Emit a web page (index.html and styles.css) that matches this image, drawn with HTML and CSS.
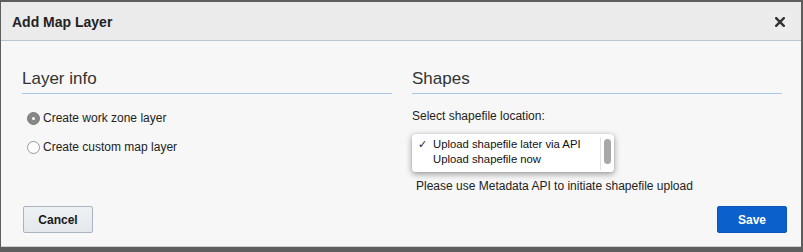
FILE: index.html
```html
<!DOCTYPE html>
<html>
<head>
<meta charset="utf-8">
<link rel="stylesheet" href="styles.css">
</head>
<body>
<div class="dialog">
  <div class="dlg-header">
    <span class="dlg-title">Add Map Layer</span>
    <span class="dlg-close">
      <svg width="10" height="10" viewBox="0 0 10 10"><path d="M1.2 1.2 L8.8 8.8 M8.8 1.2 L1.2 8.8" stroke="#333" stroke-width="2.4" stroke-linecap="square"/></svg>
    </span>
  </div>
  <div class="dlg-body">
    <div class="cols">
      <div class="col">
        <div class="col-head">Layer info</div>
        <div class="radios">
          <div class="radio-row"><span class="radio checked"></span><span class="radio-label">Create work zone layer</span></div>
          <div class="radio-row"><span class="radio"></span><span class="radio-label">Create custom map layer</span></div>
        </div>
      </div>
      <div class="col">
        <div class="col-head">Shapes</div>
        <div class="field-label">Select shapefile location:</div>
        <div class="listbox">
          <div class="options">
            <div class="option"><span class="check">✓</span>Upload shapefile later via API</div>
            <div class="option"><span class="check"></span>Upload shapefile now</div>
          </div>
          <div class="scroll"><span class="thumb"></span></div>
        </div>
        <div class="note">Please use Metadata API to initiate shapefile upload</div>
      </div>
    </div>
    <div class="dlg-footer">
      <button class="btn btn-cancel">Cancel</button>
      <button class="btn btn-save">Save</button>
    </div>
  </div>
</div>
</body>
</html>
```
FILE: styles.css
```css
html, body {
  margin: 0;
  padding: 0;
}
body {
  background: #5e5e5e;
  width: 803px;
  height: 252px;
  overflow: hidden;
  font-family: "Liberation Sans", Arial, sans-serif;
  color: #222;
}
.dialog {
  margin: 2px 0 0 1px;
  width: 800px;
  background: #f7f7f7;
  border-bottom: 1px solid #d0d0d0;
}
.dlg-header {
  box-sizing: border-box;
  height: 39px;
  padding: 2px 11px 0 11px;
  background: #ebebeb;
  border-bottom: 1px solid #b9c5d2;
  display: flex;
  align-items: center;
  justify-content: space-between;
}
.dlg-title {
  font-size: 14px;
  font-weight: bold;
  color: #222;
}
.dlg-close {
  width: 20px;
  height: 20px;
  display: flex;
  align-items: center;
  justify-content: center;
  background: #ececec;
}
.dlg-body {
  padding: 28px 14px 13px 21px;
}
.cols {
  display: grid;
  grid-template-columns: 370px 370px;
  column-gap: 20px;
}
.col-head {
  font-size: 17px;
  line-height: 20px;
  color: #333;
  padding-bottom: 4px;
  border-bottom: 1px solid #a6c8ee;
}
.radios {
  margin-top: 14px;
  display: flex;
  flex-direction: column;
  gap: 9px;
  padding-left: 5px;
}
.radio-row {
  display: flex;
  align-items: center;
  height: 20px;
  font-size: 12px;
}
.radio {
  box-sizing: border-box;
  width: 13px;
  height: 13px;
  border-radius: 50%;
  border: 1px solid #9a9a9a;
  background: #fff;
  margin-right: 3px;
  position: relative;
}
.radio.checked {
  background: #878787;
  border-color: #7a7a7a;
}
.radio.checked::after {
  content: "";
  position: absolute;
  left: 4px;
  top: 4px;
  width: 3px;
  height: 3px;
  border-radius: 50%;
  background: #fff;
}
.field-label {
  margin-top: 12px;
  font-size: 12px;
  line-height: 20px;
}
.listbox {
  margin-top: 8px;
  width: 202px;
  height: 38px;
  background: #fff;
  border-radius: 3px;
  box-shadow: 0 2px 6px rgba(0,0,0,0.4), 0 0 1px rgba(0,0,0,0.3);
  display: flex;
  justify-content: space-between;
  box-sizing: border-box;
  padding: 3px 0 0 6px;
}
.option {
  font-size: 11.3px;
  line-height: 15px;
  color: #111;
  display: flex;
}
.check {
  width: 15px;
  font-family: "DejaVu Sans", sans-serif;
  font-size: 11px;
  font-weight: bold;
  color: #222;
}
.scroll {
  width: 12px;
  height: 33px;
  border-left: 1px solid #e2e2e2;
  box-sizing: border-box;
  padding: 2px 0 0 3px;
  margin-right: 2px;
}
.thumb {
  display: block;
  width: 7px;
  height: 25px;
  border-radius: 4px;
  background: #a8a8a8;
}
.note {
  margin-top: 4px;
  margin-left: 4px;
  font-size: 12px;
  line-height: 20px;
}
.dlg-footer {
  margin-top: 10px;
  display: flex;
  justify-content: space-between;
  padding-left: 1px;
}
.btn {
  width: 70px;
  height: 27px;
  font-family: "Liberation Sans", Arial, sans-serif;
  font-size: 12px;
  font-weight: bold;
  border-radius: 2px;
  padding: 0;
}
.btn-cancel {
  background: linear-gradient(#eef1f4, #e4e8ec);
  border: 1px solid #a9b4c1;
  color: #1a1a1a;
}
.btn-save {
  background: #0c60cb;
  border: 1px solid #0a57b9;
  color: #fff;
}
```
